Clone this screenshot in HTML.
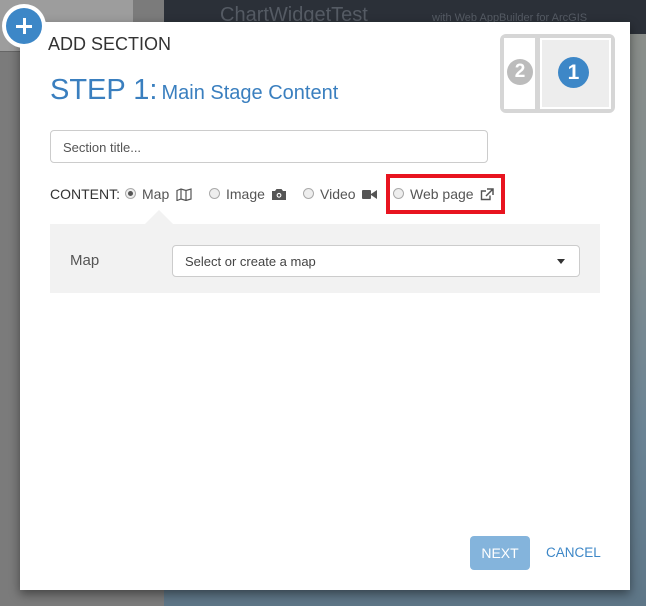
<!DOCTYPE html>
<html><head><style>
*{margin:0;padding:0;box-sizing:border-box}
body{width:646px;height:606px;overflow:hidden;position:relative;font-family:"Liberation Sans",sans-serif;background:#6b7f8d}
.abs{position:absolute}
</style></head><body>
<div class="abs" style="left:0;top:0;width:164px;height:606px;background:#7b7b7b"></div>
<div class="abs" style="left:0;top:0;width:133px;height:52px;background:#9d9d9d;border-bottom:1px solid #666"></div>
<div class="abs" style="left:164px;top:0;width:482px;height:34px;background:#2b3038"></div>
<div class="abs" style="left:220px;top:4px;color:#555b64;font-size:20px">ChartWidgetTest</div>
<div class="abs" style="left:432px;top:12px;color:#555b64;font-size:11px">with Web AppBuilder for ArcGIS</div>
<div class="abs" style="left:164px;top:34px;width:482px;height:572px;background:linear-gradient(180deg,#8a8e8a 0%,#7f8c90 40%,#6a8394 70%,#5e7687 100%)"></div>
<div class="abs" style="left:20px;top:22px;width:610px;height:568px;background:#fff;box-shadow:0 4px 10px rgba(0,0,0,.45)"></div>
<div class="abs" style="left:2px;top:4px;width:44px;height:44px;border-radius:50%;background:#fff"></div>
<div class="abs" style="left:6px;top:8px;width:36px;height:36px;border-radius:50%;background:#3d87c7"></div>
<div class="abs" style="left:16px;top:24.5px;width:16px;height:3px;background:#fff"></div>
<div class="abs" style="left:22.5px;top:18px;width:3px;height:16px;background:#fff"></div>
<div class="abs" style="left:48px;top:34px;font-size:18px;color:#333">ADD SECTION</div>
<div class="abs" style="left:50px;top:74px;font-size:29px;color:#3a7fbf">STEP 1:<span style="font-size:20px;margin-left:4px">Main Stage Content</span></div>
<div class="abs" style="left:500px;top:34px;width:115px;height:79px;border:4px solid #d6d6d6;border-radius:6px;background:#d6d6d6"></div>
<div class="abs" style="left:504px;top:38px;width:31px;height:71px;background:#fff"></div>
<div class="abs" style="left:540px;top:38px;width:71px;height:71px;background:#ededed;border:2px solid #fff"></div>
<div class="abs" style="left:507px;top:59px;width:26px;height:26px;border-radius:50%;background:#bcbcbc;color:#fff;font-weight:bold;font-size:19px;text-align:center;line-height:26px">2</div>
<div class="abs" style="left:558px;top:57px;width:31px;height:31px;border-radius:50%;background:#3d87c7;color:#fff;font-weight:bold;font-size:21px;text-align:center;line-height:31px">1</div>
<div class="abs" style="left:50px;top:130px;width:438px;height:33px;border:1px solid #ccc;border-radius:4px;font-size:13px;color:#555;padding:9px 12px">Section title...</div>
<div class="abs" style="left:50px;top:186px;font-size:14px;color:#333;white-space:nowrap">CONTENT:</div>
<div class="abs" style="left:125px;top:188px;width:11px;height:11px;border-radius:50%;border:1px solid #aaa;background:#eee"><div style="margin:2px;width:5px;height:5px;border-radius:50%;background:#555"></div></div>
<div class="abs" style="left:142px;top:186px;font-size:14px;color:#555">Map</div>
<svg class="abs" style="left:176px;top:188px" width="16" height="13" viewBox="0 0 16 13"><path d="M1 2.5 5 1 10 2.5 15 1V11L10 12.5 5 11 1 12.5Z M5 1V11 M10 2.5V12.5" fill="none" stroke="#555" stroke-width="1.2"/></svg>
<div class="abs" style="left:209px;top:188px;width:11px;height:11px;border-radius:50%;border:1px solid #aaa;background:#eee"></div>
<div class="abs" style="left:226px;top:186px;font-size:14px;color:#555">Image</div>
<svg class="abs" style="left:271px;top:188px" width="16" height="13" viewBox="0 0 16 13"><path d="M1 3H4L5.5 1H10.5L12 3H15V12H1Z" fill="#555"/><circle cx="8" cy="7.3" r="2.4" fill="#fff"/><circle cx="8" cy="7.3" r="1.3" fill="#555"/></svg>
<div class="abs" style="left:303px;top:188px;width:11px;height:11px;border-radius:50%;border:1px solid #aaa;background:#eee"></div>
<div class="abs" style="left:320px;top:186px;font-size:14px;color:#555">Video</div>
<svg class="abs" style="left:362px;top:189px" width="15" height="11" viewBox="0 0 15 11"><rect x="0" y="1" width="9" height="9" rx="1" fill="#555"/><path d="M9 5 15 1V10L9 6Z" fill="#555"/></svg>
<div class="abs" style="left:386px;top:174px;width:119px;height:40px;border:4px solid #e8141f"></div>
<div class="abs" style="left:393px;top:188px;width:11px;height:11px;border-radius:50%;border:1px solid #aaa;background:#eee"></div>
<div class="abs" style="left:410px;top:186px;font-size:14px;color:#555">Web page</div>
<svg class="abs" style="left:480px;top:188px" width="14" height="13" viewBox="0 0 14 13"><path d="M10 7.5V11.5H1.5V3H6" fill="none" stroke="#555" stroke-width="1.4"/><path d="M7 1H13V7M13 1 6 8" fill="none" stroke="#555" stroke-width="1.5"/></svg>
<div class="abs" style="left:50px;top:224px;width:550px;height:69px;background:#f2f2f2"></div>
<div class="abs" style="left:145px;top:210px;width:0;height:0;border-left:14px solid transparent;border-right:14px solid transparent;border-bottom:14px solid #f2f2f2"></div>
<div class="abs" style="left:70px;top:252px;font-size:15px;color:#555">Map</div>
<div class="abs" style="left:172px;top:245px;width:408px;height:32px;background:#fff;border:1px solid #ccc;border-radius:4px;font-size:13px;color:#444;padding:8px 12px">Select or create a map</div>
<div class="abs" style="left:557px;top:259px;width:0;height:0;border-left:4px solid transparent;border-right:4px solid transparent;border-top:5px solid #333"></div>
<div class="abs" style="left:470px;top:536px;width:60px;height:34px;background:#84b4dc;border-radius:4px;color:#fff;font-size:14px;text-align:center;line-height:34px">NEXT</div>
<div class="abs" style="left:546px;top:545px;font-size:13.5px;color:#3d87c7">CANCEL</div>
</body></html>
